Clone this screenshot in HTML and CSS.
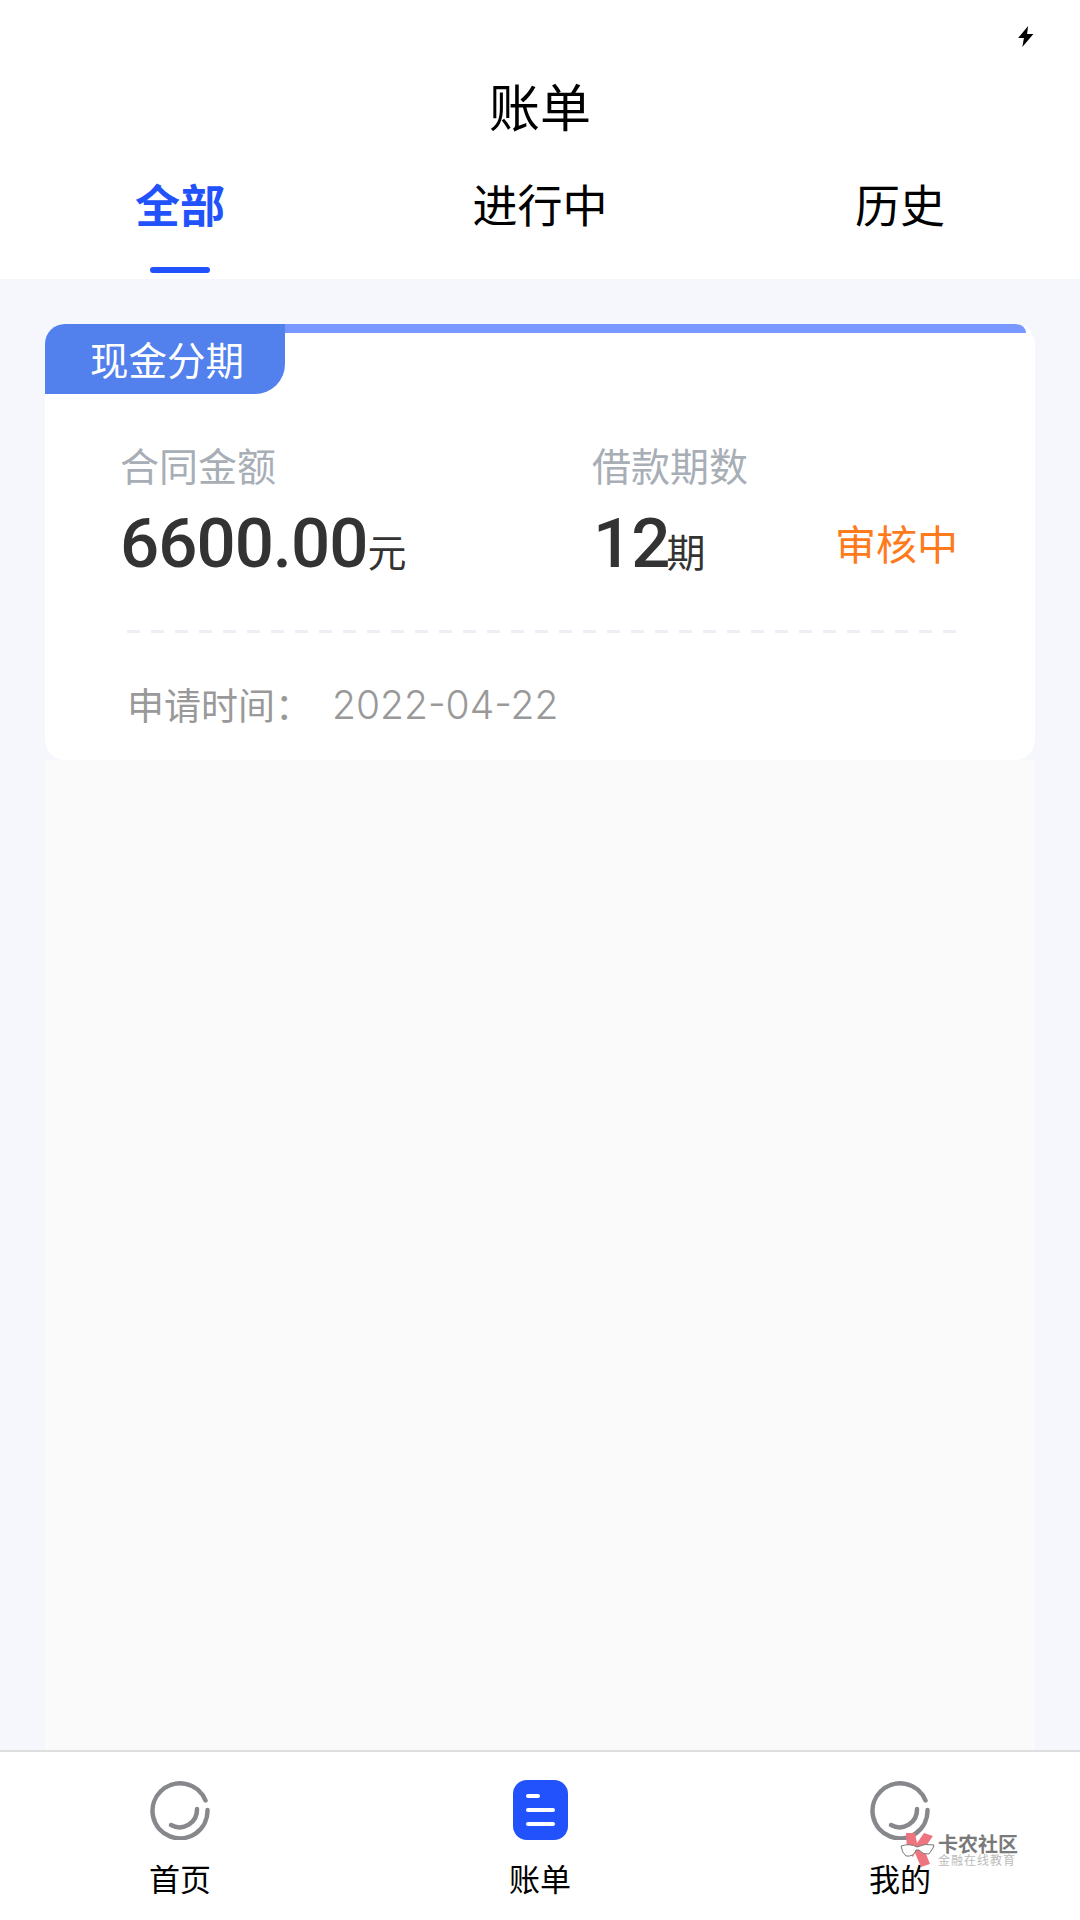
FILE: index.html
```html
<!DOCTYPE html>
<html lang="zh">
<head>
    <title>账单</title>
    <meta charset="UTF-8">
    <meta name="viewport" content="width=device-width, initial-scale=1.0">
    <link rel="stylesheet" href="styles.css">
</head>
<body>

<header class="top">
    <div class="status-bar">
        <svg class="bolt" width="17" height="21" viewBox="0 0 16 20"><path d="M10.5 0 L1 11.5 H6.5 L5 20 L15.5 7.5 H9.5 Z" fill="#000"/></svg>
    </div>
    <h1 class="title">账单</h1>
    <nav class="tabs">
        <div class="tab tab-active">全部</div>
        <div class="tab">进行中</div>
        <div class="tab">历史</div>
    </nav>
</header>

<main class="content">
    <section class="card">
        <div class="card-head">
            <div class="tag">现金分期</div>
            <div class="strip"></div>
        </div>
        <div class="stats">
            <div class="stat stat-amount">
                <div class="stat-label">合同金额</div>
                <div class="stat-value"><span class="num num-tight">6600.00</span><span class="unit">元</span></div>
            </div>
            <div class="stat stat-term">
                <div class="stat-label">借款期数</div>
                <div class="stat-value"><span class="num num-term">12</span><span class="unit">期</span></div>
            </div>
            <div class="status">审核中</div>
        </div>
        <div class="dash"></div>
        <div class="apply-row"><span class="apply-label">申请时间：</span><span class="apply-date">2022-04-22</span></div>
    </section>
    <div class="filler"></div>
</main>

<footer class="tabbar">
    <div class="bar-item">
        <svg class="ring" width="60" height="60" viewBox="0 0 60 60"><path d="M55.5 20.5 A27.5 27.5 0 1 0 57.5 30" fill="none" stroke="#87888c" stroke-width="4.5" stroke-linecap="round"/><path d="M47 29 A17.5 17.5 0 0 1 21 45" fill="none" stroke="#87888c" stroke-width="4.5" stroke-linecap="round"/></svg>
        <span class="bar-label">首页</span>
    </div>
    <div class="bar-item">
        <div class="bill-icon">
            <span class="bill-line bill-line-short"></span>
            <span class="bill-line"></span>
            <span class="bill-line"></span>
        </div>
        <span class="bar-label">账单</span>
    </div>
    <div class="bar-item">
        <svg class="ring" width="60" height="60" viewBox="0 0 60 60"><path d="M55.5 20.5 A27.5 27.5 0 1 0 57.5 30" fill="none" stroke="#87888c" stroke-width="4.5" stroke-linecap="round"/><path d="M47 29 A17.5 17.5 0 0 1 21 45" fill="none" stroke="#87888c" stroke-width="4.5" stroke-linecap="round"/></svg>
        <span class="bar-label">我的</span>
    </div>
</footer>

<!-- watermark sits over the tab bar -->
<div class="watermark">
    <svg class="wm-logo" width="36" height="36" viewBox="0 0 36 36">
        <path d="M6 1 H15 L17 11 L24 1 L33 4 L24 17 L30 32 L21 35 L15 21 L13 25 L7 19 Z" fill="#ee7480"/>
        <path d="M1 14 Q10 11 17 15 Q25 11 34 13 L33 16 L29 22 Q23 23 19 18 L16 18 Q14 25 6 24 Q2 21 1 14 Z" fill="#fff" stroke="#777" stroke-width="1"/>
    </svg>
    <div class="wm-text">
        <div class="wm-name">卡农社区</div>
        <div class="wm-sub">金融在线教育</div>
    </div>
</div>

</body>
</html>
```

FILE: styles.css
```css
* {
    box-sizing: border-box;
}

body {
    margin: 0;
    height: 1920px;
    display: flex;
    flex-direction: column;
    position: relative;
    background-color: #f6f7fc;
    color: #000;
    font-family: "Noto Sans CJK SC", "Noto Sans", sans-serif;
}

/* header */
.top {
    background-color: #fff;
    height: 279px;
}

.status-bar {
    height: 55px;
    display: flex;
    justify-content: flex-end;
    padding: 26px 46px 0 0;
}

.title {
    margin: 0;
    height: 103px;
    line-height: 100px;
    text-align: center;
    font-size: 51px;
    font-weight: 400;
}

.tabs {
    display: grid;
    grid-template-columns: repeat(3, 1fr);
}

.tab {
    height: 115px;
    padding-top: 16px;
    line-height: 60px;
    text-align: center;
    font-size: 45px;
    position: relative;
}

.tab-active {
    color: #2152fb;
    font-weight: 700;
}

.tab-active::after {
    content: "";
    position: absolute;
    left: 150px;
    top: 109px;
    width: 60px;
    height: 6px;
    border-radius: 3px;
    background-color: #2152fb;
}

/* card */
.content {
    flex: 1;
    display: flex;
    flex-direction: column;
    padding: 45px 45px 0;
}

.card {
    height: 436px;
    background-color: #fff;
    border-radius: 20px;
    overflow: hidden;
}

.card-head {
    display: flex;
    align-items: flex-start;
}

.tag {
    width: 240px;
    height: 70px;
    padding-left: 45px;
    line-height: 69px;
    font-size: 38.5px;
    color: #fff;
    background-color: #5280ec;
    border-radius: 0 0 30px 0;
}

.strip {
    flex: 1;
    height: 9px;
    margin-right: 9px;
    background-color: #7898ff;
    border-radius: 0 12px 0 0;
}

.stats {
    display: flex;
    padding: 50px 77px 0 75px;
}

.stat-amount {
    width: 472px;
}

.stat-term {
    flex: 1;
}

.stat-label {
    height: 40px;
    line-height: 40px;
    font-size: 39px;
    color: #a8aeb6;
}

.stat-value {
    height: 92px;
    margin-top: 14px;
    display: flex;
    align-items: baseline;
    line-height: 92px;
    color: #333;
}

.num {
    font-family: Roboto, sans-serif;
    font-weight: 500;
    font-size: 69px;
}

.num-tight {
    letter-spacing: -1px;
}

.num-term {
    margin: 0 -3px 0 1px;
    letter-spacing: -1px;
}

.unit {
    font-size: 39px;
}

.status {
    align-self: flex-end;
    height: 70px;
    margin-bottom: 13px;
    line-height: 70px;
    font-size: 41px;
    color: #ff7a1a;
}

.dash {
    height: 3px;
    margin: 40px 79px 0 82px;
    background-image: repeating-linear-gradient(to right, #eeeef6 0, #eeeef6 13px, transparent 13px, transparent 24px);
}

.apply-row {
    display: flex;
    align-items: center;
    height: 50px;
    margin-top: 46px;
    padding-left: 82px;
    font-size: 37px;
    color: #999;
}

.apply-label {
    width: 205px;
}

.apply-date {
    font-family: Inter, sans-serif;
    font-weight: 300;
    font-size: 39px;
}

.filler {
    flex: 1;
    background-color: #fafafa;
}

/* bottom bar */
.tabbar {
    height: 170px;
    display: grid;
    grid-template-columns: repeat(3, 1fr);
    background-color: #fff;
    border-top: 2px solid #dedede;
}

.bar-item {
    display: flex;
    flex-direction: column;
    align-items: center;
    padding-top: 28px;
}

.ring, .bill-icon {
    width: 60px;
    height: 60px;
}

.bill-icon {
    width: 55px;
    border-radius: 14px;
    background-color: #2152fb;
    display: flex;
    flex-direction: column;
    justify-content: center;
    gap: 9.5px;
    padding: 0 13px;
}

.bill-line {
    height: 4.5px;
    border-radius: 2px;
    background-color: #fff;
}

.bill-line-short {
    width: 14px;
}

.bar-label {
    margin-top: 18px;
    height: 40px;
    line-height: 40px;
    font-size: 31px;
}

.watermark {
    position: absolute;
    left: 900px;
    top: 1832px;
    display: flex;
    gap: 2px;
}

.wm-text {
    padding-top: 1px;
}

.wm-name {
    height: 20px;
    line-height: 22px;
    font-size: 20px;
    font-weight: 700;
    color: #7a7a7a;
}

.wm-sub {
    height: 14px;
    line-height: 14px;
    font-size: 12px;
    letter-spacing: 1px;
    color: #bbb;
}
```
